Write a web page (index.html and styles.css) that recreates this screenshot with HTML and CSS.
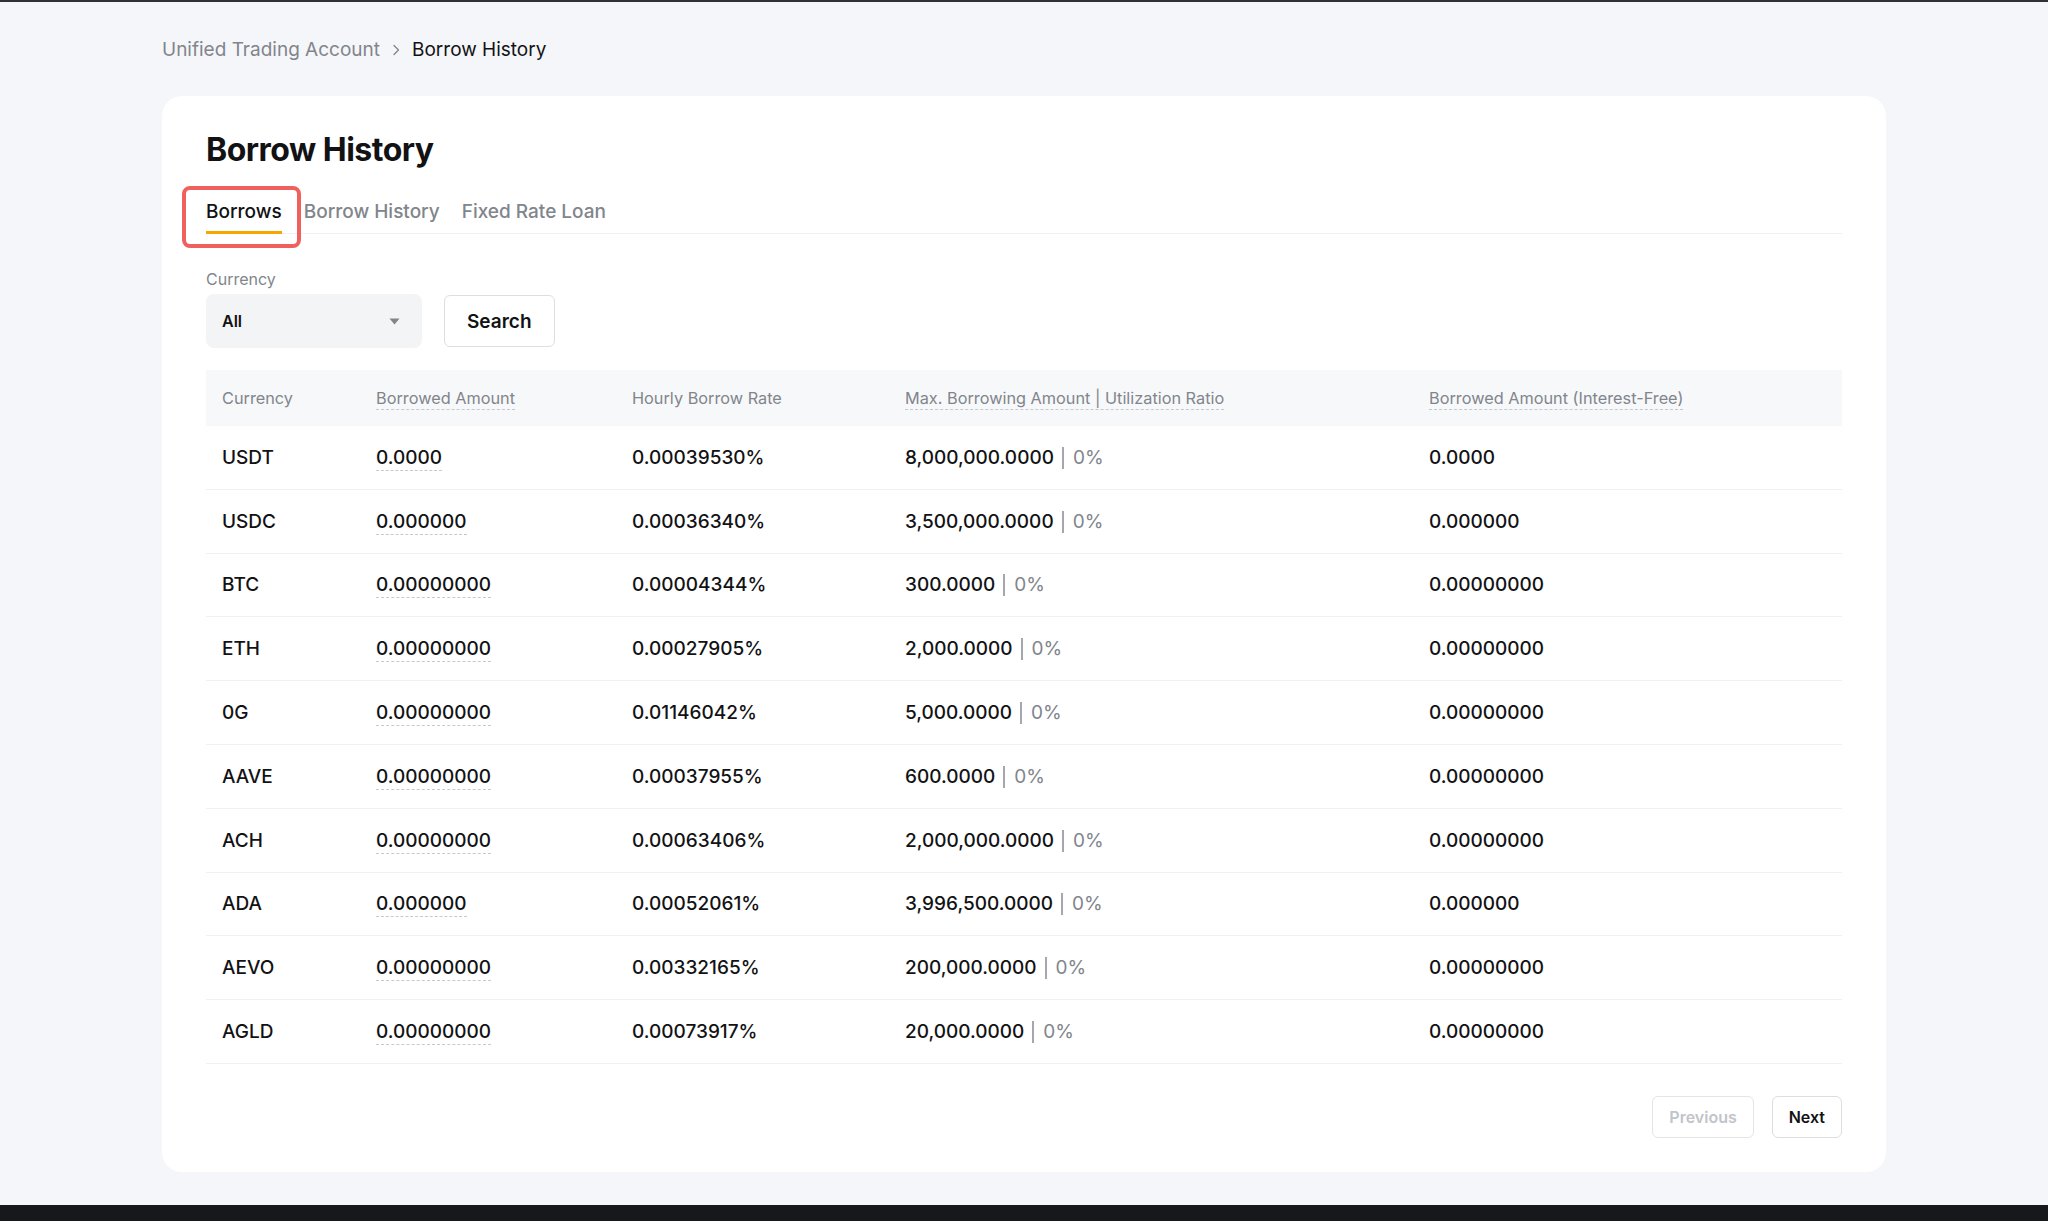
FILE: index.html
```html
<!DOCTYPE html>
<html lang="en">
<head>
    <meta charset="UTF-8">
    <meta name="viewport" content="width=device-width, initial-scale=1.0">
    <title>Borrow History</title>
    <link rel="stylesheet" href="styles.css">
</head>
<body>
    <main class="page">
        <nav class="breadcrumb">
            <span class="crumb">Unified Trading Account</span>
            <svg class="chevron" width="8" height="12" viewBox="0 0 8 12"><path d="M2 1.5 L6.5 6 L2 10.5" fill="none" stroke="#81858c" stroke-width="1.3" stroke-linecap="round" stroke-linejoin="round"/></svg>
            <span class="crumb current">Borrow History</span>
        </nav>

        <section class="card">
            <h1>Borrow History</h1>

            <div class="tabs">
                <span class="tab active">Borrows</span>
                <span class="tab">Borrow History</span>
                <span class="tab">Fixed Rate Loan</span>
            </div>

            <div class="filters">
                <div class="field">
                    <label>Currency</label>
                    <div class="select">
                        <span>All</span>
                        <svg width="11" height="7" viewBox="0 0 11 7"><path d="M0.5 0.5 H10.5 L5.5 6.5 Z" fill="#81858c"/></svg>
                    </div>
                </div>
                <button class="btn btn-search">Search</button>
            </div>

            <table class="borrows">
                <colgroup>
                    <col style="width:154px">
                    <col style="width:256px">
                    <col style="width:273px">
                    <col style="width:524px">
                    <col style="width:429px">
                </colgroup>
                <thead>
                    <tr>
                        <th>Currency</th>
                        <th><span class="tip">Borrowed Amount</span></th>
                        <th>Hourly Borrow Rate</th>
                        <th><span class="tip">Max. Borrowing Amount | Utilization Ratio</span></th>
                        <th><span class="tip">Borrowed Amount (Interest-Free)</span></th>
                    </tr>
                </thead>
                <tbody>
                    <tr>
                        <td>USDT</td>
                        <td><span class="tip">0.0000</span></td>
                        <td>0.00039530%</td>
                        <td>8,000,000.0000<span class="ratio">0%</span></td>
                        <td>0.0000</td>
                    </tr>
                    <tr>
                        <td>USDC</td>
                        <td><span class="tip">0.000000</span></td>
                        <td>0.00036340%</td>
                        <td>3,500,000.0000<span class="ratio">0%</span></td>
                        <td>0.000000</td>
                    </tr>
                    <tr>
                        <td>BTC</td>
                        <td><span class="tip">0.00000000</span></td>
                        <td>0.00004344%</td>
                        <td>300.0000<span class="ratio">0%</span></td>
                        <td>0.00000000</td>
                    </tr>
                    <tr>
                        <td>ETH</td>
                        <td><span class="tip">0.00000000</span></td>
                        <td>0.00027905%</td>
                        <td>2,000.0000<span class="ratio">0%</span></td>
                        <td>0.00000000</td>
                    </tr>
                    <tr>
                        <td>0G</td>
                        <td><span class="tip">0.00000000</span></td>
                        <td>0.01146042%</td>
                        <td>5,000.0000<span class="ratio">0%</span></td>
                        <td>0.00000000</td>
                    </tr>
                    <tr>
                        <td>AAVE</td>
                        <td><span class="tip">0.00000000</span></td>
                        <td>0.00037955%</td>
                        <td>600.0000<span class="ratio">0%</span></td>
                        <td>0.00000000</td>
                    </tr>
                    <tr>
                        <td>ACH</td>
                        <td><span class="tip">0.00000000</span></td>
                        <td>0.00063406%</td>
                        <td>2,000,000.0000<span class="ratio">0%</span></td>
                        <td>0.00000000</td>
                    </tr>
                    <tr>
                        <td>ADA</td>
                        <td><span class="tip">0.000000</span></td>
                        <td>0.00052061%</td>
                        <td>3,996,500.0000<span class="ratio">0%</span></td>
                        <td>0.000000</td>
                    </tr>
                    <tr>
                        <td>AEVO</td>
                        <td><span class="tip">0.00000000</span></td>
                        <td>0.00332165%</td>
                        <td>200,000.0000<span class="ratio">0%</span></td>
                        <td>0.00000000</td>
                    </tr>
                    <tr>
                        <td>AGLD</td>
                        <td><span class="tip">0.00000000</span></td>
                        <td>0.00073917%</td>
                        <td>20,000.0000<span class="ratio">0%</span></td>
                        <td>0.00000000</td>
                    </tr>
                </tbody>
            </table>

            <div class="pager">
                <button class="btn btn-page" disabled>Previous</button>
                <button class="btn btn-page">Next</button>
            </div>
        </section>
    </main>
    <footer class="bottom-bar"></footer>
</body>
</html>
```

FILE: styles.css
```css
html, body {
    height: 100%;
}
body {
    margin: 0;
    font-family: "Inter", "Noto Sans", sans-serif;
    color: #121214;
    background: #f5f6f9;
    border-top: 2px solid #2f3137;
    box-sizing: border-box;
    display: flex;
    flex-direction: column;
}
.page {
    flex: 1;
    width: 1724px;
    margin: 0 auto;
    padding-top: 36px;
}
.breadcrumb {
    display: flex;
    align-items: center;
    gap: 12px;
    height: 24px;
    font-size: 19px;
    line-height: 24px;
    margin-bottom: 34px;
}
.crumb {
    color: #81858c;
}
.crumb.current {
    color: #121214;
}
.card {
    background: #fff;
    border-radius: 20px;
    padding: 34px 44px 34px;
}
h1 {
    margin: 0;
    font-size: 32px;
    line-height: 40px;
    font-weight: 700;
    letter-spacing: -0.5px;
}
.tabs {
    display: flex;
    gap: 22px;
    margin-top: 30px;
    border-bottom: 1px solid #f0f1f3;
}
.tab {
    position: relative;
    font-size: 19px;
    line-height: 24px;
    font-weight: 500;
    color: #81858c;
    padding-bottom: 7px;
    border-bottom: 3px solid transparent;
    margin-bottom: -1px;
}
.tab.active {
    color: #121214;
    border-bottom-color: #f7a600;
}
/* red highlight frame around the selected tab */
.tab.active::before {
    content: "";
    position: absolute;
    top: -14px;
    left: -24px;
    right: -19px;
    bottom: -17px;
    border: 4px solid #f0605d;
    border-radius: 8px;
}
.filters {
    display: flex;
    align-items: flex-end;
    gap: 22px;
    margin-top: 35px;
}
.field label {
    display: block;
    font-size: 16px;
    line-height: 20px;
    color: #81858c;
    margin-bottom: 5px;
}
.select {
    width: 216px;
    height: 54px;
    box-sizing: border-box;
    padding: 0 22px 0 16px;
    background: #f3f4f6;
    border-radius: 8px;
    display: flex;
    align-items: center;
    justify-content: space-between;
    font-size: 16px;
    font-weight: 600;
}
.btn {
    font-family: inherit;
    background: #fff;
    border: 1px solid #dcdee2;
    border-radius: 6px;
    color: #121214;
    cursor: pointer;
}
.btn-search {
    height: 52px;
    padding: 0 22px;
    font-size: 19px;
    font-weight: 600;
    margin-bottom: 1px;
}
.borrows {
    width: 100%;
    margin-top: 22px;
    border-collapse: collapse;
    table-layout: fixed;
}
.borrows th {
    background: #f7f8fa;
    height: 56px;
    padding: 0 16px;
    text-align: left;
    font-size: 16.3px;
    font-weight: 400;
    color: #81858c;
    white-space: nowrap;
}
.borrows td {
    height: 62.8px;
    padding: 0 16px;
    font-size: 19px;
    font-weight: 500;
    border-bottom: 1px solid #f0f1f3;
    white-space: nowrap;
}
.tip {
    border-bottom: 1px dashed #c5c9d0;
    padding-bottom: 1px;
}
.ratio {
    display: inline-block;
    color: #81858c;
    font-weight: 400;
    margin-left: 8px;
    padding-left: 9px;
    border-left: 2px solid #a4a8ae;
    line-height: 22px;
}
.pager {
    display: flex;
    justify-content: flex-end;
    gap: 18px;
    margin-top: 32px;
}
.btn-page {
    height: 42px;
    padding: 0 16px;
    font-size: 16px;
    font-weight: 600;
}
.btn-page:disabled {
    color: #c1c4ca;
    border-color: #e3e5e8;
    cursor: default;
}
.bottom-bar {
    height: 16px;
    background: #17181c;
}
```
